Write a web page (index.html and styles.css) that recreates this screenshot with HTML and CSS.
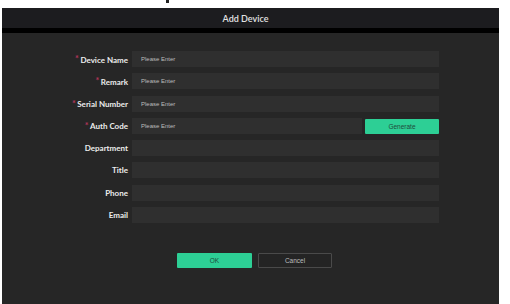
FILE: index.html
```html
<!DOCTYPE html>
<html>
<head>
<meta charset="utf-8">
<link rel="stylesheet" href="styles.css">
</head>
<body>
<div class="topstrip"><span class="mark"></span></div>
<div class="dialog">
  <div class="header">Add Device</div>
  <div class="sep"></div>
  <div class="content">
    <div class="form">
      <div class="row"><label class="lbl"><span class="req">*</span>Device Name</label><div class="input"><span class="ph">Please Enter</span></div></div>
      <div class="row"><label class="lbl"><span class="req">*</span>Remark</label><div class="input"><span class="ph">Please Enter</span></div></div>
      <div class="row"><label class="lbl"><span class="req">*</span>Serial Number</label><div class="input"><span class="ph">Please Enter</span></div></div>
      <div class="row"><label class="lbl"><span class="req">*</span>Auth Code</label><div class="field-split"><div class="input grow"><span class="ph">Please Enter</span></div><button class="btn green gen">Generate</button></div></div>
      <div class="row"><label class="lbl">Department</label><div class="input"></div></div>
      <div class="row"><label class="lbl">Title</label><div class="input"></div></div>
      <div class="row"><label class="lbl">Phone</label><div class="input"></div></div>
      <div class="row"><label class="lbl">Email</label><div class="input"></div></div>
    </div>
    <div class="actions">
      <button class="btn green ok">OK</button>
      <button class="btn cancel">Cancel</button>
    </div>
  </div>
</div>
</body>
</html>
```
FILE: styles.css
```css
html, body { margin: 0; padding: 0; background: #fff; }
body { width: 510px; height: 304px; overflow: hidden; font-family: "Lato", "Liberation Sans", sans-serif; }
.topstrip { height: 8px; display: flex; }
.mark { display: block; width: 3px; height: 3px; margin-left: 166px; background: #222; }
.dialog { margin-left: 2px; width: 497px; height: 296px; display: flex; flex-direction: column; background: #262626; }
.header { height: 20px; background: #1c1c1f; color: #e2e2e2; font-size: 9px; font-weight: 600; display: flex; align-items: center; justify-content: center; padding-right: 10px; }
.sep { height: 5px; background: #000; }
.content { flex: 1; padding-top: 18px; display: flex; flex-direction: column; }
.form { display: flex; flex-direction: column; gap: 6.3px; }
.row { display: grid; grid-template-columns: 126px 307px; column-gap: 4px; height: 16px; align-items: center; }
.lbl { text-align: right; color: #ececec; font-size: 8px; font-weight: 700; white-space: nowrap; }
.req { color: #b3355a; font-size: 9px; font-weight: 700; margin-right: 1.5px; position: relative; top: -0.5px; }
.input { height: 16px; background: #2f2f2f; display: flex; align-items: center; padding-left: 9px; box-sizing: border-box; }
.ph { font-family: "Liberation Sans", sans-serif; font-size: 6px; color: #bdbdbd; }
.field-split { display: flex; gap: 3px; height: 16px; }
.grow { flex: 1; }
.btn { font-family: "Liberation Sans", sans-serif; font-size: 6.5px; border: none; padding: 0; margin: 0; }
.green { background: #2dcf95; color: #1f4a3b; border-radius: 1px; }
.gen { width: 74px; height: 15px; margin-top: 1px; }
.actions { display: flex; gap: 6px; margin-top: 30px; padding-left: 175px; }
.ok { width: 75px; height: 15px; }
.cancel { width: 74px; height: 15px; background: #242424; border: 1px solid #4a4a4a; color: #bdbdbd; box-sizing: border-box; border-radius: 1px; }
```
